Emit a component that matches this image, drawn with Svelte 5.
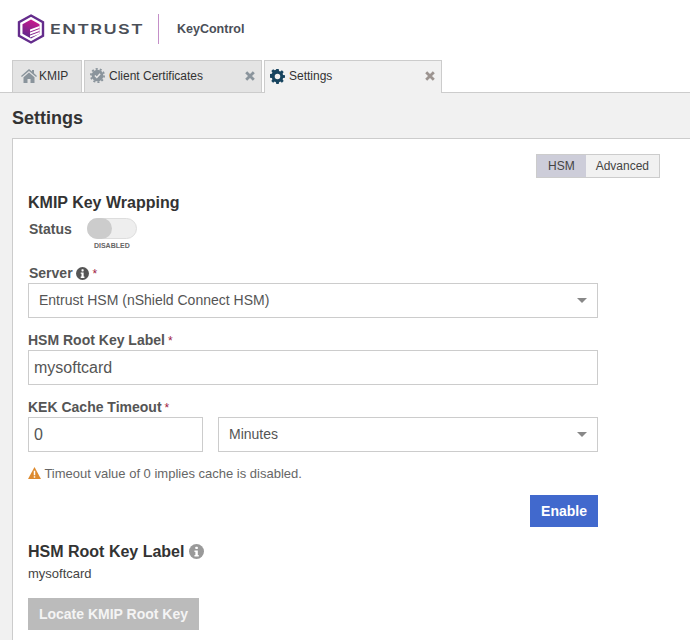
<script>
  const tabs = [
    { name: "KMIP", icon: "home", width: 70 },
    { name: "Client Certificates", icon: "cert", width: 178, close: true },
    { name: "Settings", icon: "gear", width: 178, close: true, active: true }
  ];

  let mode = $state("HSM");
  let enabled = $state(false);
  let rootKey = $state("mysoftcard");
  let timeout = $state("0");

  const gear = "M8.4 0h3.2l.5 2.5 1.6.7 2.2-1.4 2.3 2.3-1.4 2.2.7 1.6 2.5.5v3.2l-2.5.5-.7 1.6 1.4 2.2-2.3 2.3-2.2-1.4-1.6.7-.5 2.5H8.4l-.5-2.5-1.6-.7-2.2 1.4-2.3-2.3 1.4-2.2-.7-1.6-2.5-.5V6.800l2.5-.5.7-1.600-1.400-2.200 2.300-2.300 2.200 1.400 1.600-.7zM10 6.300a3.700 3.700 0 1 0 0 7.400 3.700 3.700 0 0 0 0-7.400z";
</script>

{#snippet info(color)}
  <svg class="info" viewBox="0 0 16 16" width="13" height="13">
    <circle cx="8" cy="8" r="8" fill={color} />
    <rect x="6.800" y="2.800" width="2.600" height="2.600" rx="0.6" fill="#fff" />
    <path d="M5.800 6.800h3.600v5h1v1.600H5.800v-1.600h1v-3.400h-1z" fill="#fff" />
  </svg>
{/snippet}

{#snippet chevron()}
  <svg class="chevron" viewBox="0 0 10 5" width="10" height="5"><path d="M0 0h10L5 5z" fill="#888" /></svg>
{/snippet}

<header class="brand">
  <svg class="logo" viewBox="0 0 28 30" width="28" height="30">
    <defs>
      <linearGradient id="hex" x1="0.7" y1="0" x2="0.3" y2="1">
        <stop offset="0" stop-color="#d0148c" />
        <stop offset="1" stop-color="#5b2a8c" />
      </linearGradient>
    </defs>
    <path d="M14 1.500 26 8.200v13.600L14 28.500 2 21.800V8.200z" fill="none" stroke="#642c8c" stroke-width="2.400" />
    <path d="M14 5.500 22.500 10.300v9.400L14 24.500 5.500 19.700v-9.400z" fill="url(#hex)" />
    <path d="M13 15.500l9.500-3.500v2l-9.500 3.500zM13 18.500l9.500-3.500v2l-9.500 3.500zM13 21.500l9.500-3.500v2l-9.500 3.500z" fill="#fff" />
  </svg>
  <span class="wordmark"><span>ENTRUST</span></span>
  <span class="divider"></span>
  <span class="product">KeyControl</span>
</header>

<nav class="tabs">
  {#each tabs as tab}
    <div class="tab" class:active={tab.active} class:first={tab.icon === "home"} style="width: {tab.width}px">
      {#if tab.icon === "home"}
        <svg viewBox="0 0 16 14" width="16" height="14"><path d="M8 0l3 2.600V1h2v3.300L16 7l-.9 1L8 2 .9 8 0 7zM2.500 8.300 8 3.600l5.500 4.700V14H9.500v-4h-3v4h-4z" fill="#8a949c" /></svg>
      {:else if tab.icon === "cert"}
        <svg viewBox="0 0 20 20" width="15" height="15">
          <circle cx="10" cy="10" r="7.800" fill="#8a949c" />
          <circle cx="10" cy="10" r="8.800" fill="none" stroke="#8a949c" stroke-width="2.400" stroke-dasharray="2.800 2.730" />
          <path d="M6.500 10l2.600 2.600 4.400-5" fill="none" stroke="#e8e8e8" stroke-width="2" />
        </svg>
      {:else}
        <svg viewBox="0 0 20 20" width="15" height="15"><path d={gear} fill="#17445f" /></svg>
      {/if}
      <span class="tab-name">{tab.name}</span>
      {#if tab.close}
        <svg class="close" class:warm={tab.active} viewBox="0 0 10 10" width="10" height="10">
          <path d="M1.200 1.200l7.600 7.600M8.800 1.200 1.200 8.800" fill="none" stroke="currentColor" stroke-width="2.800" />
        </svg>
      {/if}
    </div>
  {/each}
</nav>

<main class="page">
  <h1>Settings</h1>
  <section class="panel">
    <div class="switcher">
      <button class:on={mode === "HSM"} onclick={() => (mode = "HSM")}>HSM</button>
      <button class:on={mode === "Advanced"} onclick={() => (mode = "Advanced")}>Advanced</button>
    </div>

    <h2>KMIP Key Wrapping</h2>
    <div class="status">
      <span class="label">Status</span>
      <div class="toggle-wrap">
        <button class="toggle" aria-label="Status" onclick={() => (enabled = !enabled)}><span class="knob"></span></button>
        <span class="toggle-text">DISABLED</span>
      </div>
    </div>

    <div class="form">
      <div class="label server-label">Server {@render info("#555")}<i>*</i></div>
      <div class="field select">Entrust HSM (nShield Connect HSM){@render chevron()}</div>

      <div class="label">HSM Root Key Label<i>*</i></div>
      <input class="field big" bind:value={rootKey} />

      <div class="label">KEK Cache Timeout<i>*</i></div>
      <div class="timeout">
        <input class="field big short" bind:value={timeout} />
        <div class="field select grow">Minutes{@render chevron()}</div>
      </div>

      <p class="warning">
        <svg viewBox="0 0 14 13" width="13" height="12">
          <path d="M7 0l7 13H0z" fill="#dd8a2e" />
          <rect x="6.200" y="4" width="1.600" height="5" fill="#fff" />
          <rect x="6.200" y="10" width="1.600" height="1.600" fill="#fff" />
        </svg>
        Timeout value of 0 implies cache is disabled.
      </p>

      <div class="actions"><button class="enable">Enable</button></div>
    </div>

    <h3>HSM Root Key Label {@render info("#999")}</h3>
    <div class="value">mysoftcard</div>
    <button class="locate" disabled>Locate KMIP Root Key</button>
  </section>
</main>

<style>
  :global(body) {
    font-family: "Liberation Sans", Arial, sans-serif;
    color: #333;
    background: #fff;
    height: 640px;
    overflow: hidden;
  }

  .brand {
    display: flex;
    align-items: center;
    height: 60px;
    padding: 0 0 3px 17px;
    box-sizing: border-box;
  }

  .wordmark {
    width: 93px;
    margin-left: 5px;
    font-family: Inter, sans-serif;
    font-size: 13.500px;
    font-weight: 600;
    letter-spacing: 1px;
    color: #4b4f58;
  }

  .wordmark span {
    display: inline-block;
    white-space: nowrap;
    transform: scaleX(1.33);
    transform-origin: left center;
  }

  .divider {
    width: 1px;
    height: 30px;
    margin: 0 18px 0 15px;
    background: #c48fc8;
  }

  .product {
    font-size: 12.500px;
    font-weight: 700;
    color: #4b4f58;
  }

  .tabs {
    display: flex;
    gap: 2px;
    height: 33px;
    padding-left: 12px;
    box-sizing: border-box;
    border-bottom: 1px solid #ccc;
  }

  .tab {
    display: flex;
    align-items: center;
    gap: 4px;
    height: 32px;
    padding: 0 6px 2px 5px;
    box-sizing: border-box;
    border: 1px solid #ccc;
    border-bottom: none;
    background: #e4e4e4;
    font-size: 12px;
    color: #333;
  }

  .tab.first {
    padding-left: 8px;
    gap: 2px;
  }

  .tab.active {
    height: 33px;
    background: #f1f1f1;
  }

  .tab-name {
    flex: 1;
  }

  .close {
    color: #8a949c;
  }

  .close.warm {
    color: #9c9490;
  }

  .page {
    height: 547px;
    padding-left: 12px;
    background: #f1f1f1;
    overflow: hidden;
  }

  h1 {
    margin: 0;
    padding: 15px 0 10px;
    font-size: 18px;
    line-height: 20px;
    font-weight: 700;
    color: #333;
  }

  .panel {
    position: relative;
    height: 510px;
    padding: 55px 0 0 15px;
    box-sizing: border-box;
    border: 1px solid #ccc;
    border-right: none;
    background: #fff;
  }

  .switcher {
    position: absolute;
    top: 15px;
    left: 523px;
    display: flex;
    height: 24px;
    border: 1px solid #ccc;
    box-sizing: border-box;
  }

  .switcher button {
    padding: 0 10px;
    border: none;
    background: #f1f1f1;
    font: 12px "Liberation Sans", Arial, sans-serif;
    color: #444;
  }

  .switcher button.on {
    padding: 0 11px;
    background: #cdcdd9;
  }

  h2 {
    margin: 0;
    font-size: 16px;
    line-height: 18px;
    font-weight: 700;
    color: #333;
  }

  .label {
    font-size: 14px;
    line-height: 16px;
    font-weight: 700;
    color: #555;
  }

  .label i {
    margin-left: 3px;
    font-style: normal;
    font-weight: 400;
    font-size: 12px;
    color: #a02040;
  }

  .status {
    display: flex;
    gap: 15px;
    margin-top: 9px;
    margin-left: 1px;
    height: 35px;
  }

  .toggle-wrap {
    display: flex;
    flex-direction: column;
    align-items: center;
    width: 50px;
    margin-top: -3px;
  }

  .toggle {
    width: 50px;
    height: 21px;
    padding: 0;
    border: 1px solid #ddd;
    border-radius: 11px;
    background: #eee;
  }

  .knob {
    display: block;
    width: 25px;
    height: 21px;
    margin: -1px;
    border-radius: 11px;
    background: #ccc;
  }

  .toggle-text {
    margin-top: 2px;
    font-size: 7px;
    line-height: 9px;
    font-weight: 700;
    color: #666;
  }

  .form {
    width: 570px;
    margin-top: 9px;
  }

  .server-label {
    margin-left: 1px;
  }

  .info {
    vertical-align: -1.500px;
  }

  .field {
    display: block;
    width: 100%;
    height: 35px;
    margin: 1px 0 14px;
    padding: 0 10px;
    box-sizing: border-box;
    border: 1px solid #ccc;
    background: #fff;
    font: 14px/33px "Liberation Sans", Arial, sans-serif;
    color: #555;
    outline: none;
  }

  .field.big {
    padding: 0 5px;
    font-size: 16px;
  }

  .select {
    position: relative;
  }

  .chevron {
    position: absolute;
    top: 14px;
    right: 10px;
  }

  .timeout {
    display: flex;
    gap: 15px;
  }

  .field.short {
    width: 175px;
    flex: none;
  }

  .grow {
    flex: 1;
  }

  .warning {
    margin: 0;
    font-size: 13px;
    line-height: 16px;
    color: #666;
  }

  .warning svg {
    vertical-align: -1px;
  }

  .actions {
    display: flex;
    justify-content: flex-end;
    margin-top: 13px;
  }

  .enable {
    width: 68px;
    height: 32px;
    border: none;
    background: #4169cd;
    color: #fff;
    font: 700 14px "Liberation Sans", Arial, sans-serif;
  }

  h3 {
    margin: 16px 0 0;
    font-size: 16px;
    line-height: 18px;
    font-weight: 700;
    color: #333;
  }

  h3 .info {
    width: 15px;
    height: 15px;
    vertical-align: -2px;
  }

  .value {
    margin-top: 6px;
    font-size: 13px;
    line-height: 14px;
    color: #444;
  }

  .locate {
    display: block;
    width: 171px;
    height: 32px;
    margin-top: 17px;
    padding: 0;
    border: none;
    background: #bbb;
    color: #f4f4f4;
    font: 700 14px "Liberation Sans", Arial, sans-serif;
  }
</style>
